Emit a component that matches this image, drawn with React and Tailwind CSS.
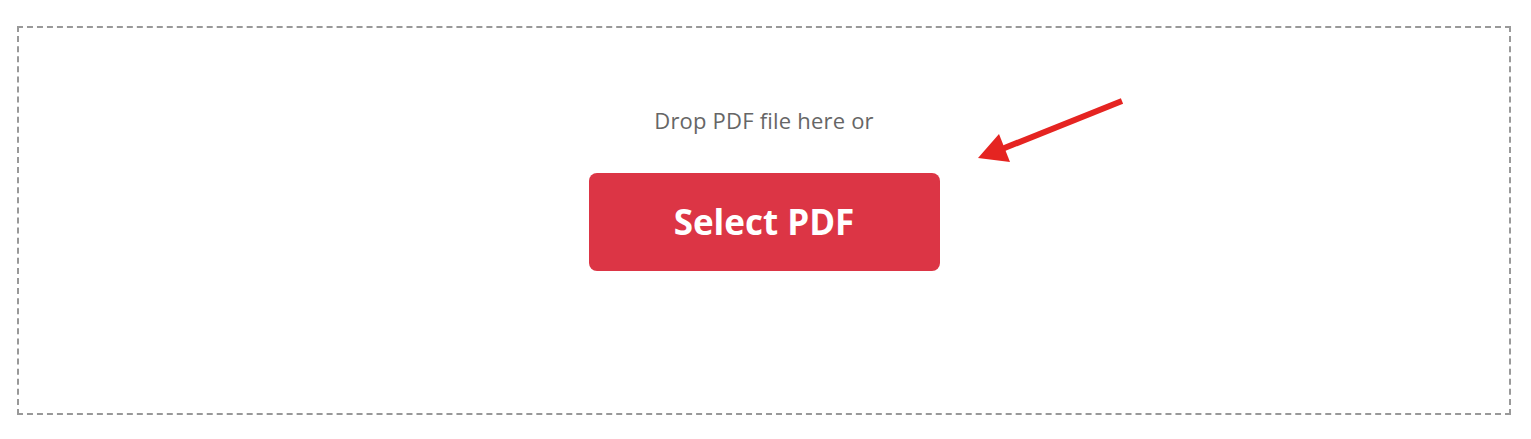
import React from 'react';

function Arrow() {
  return (
    <svg
      className="absolute left-0 top-0 pointer-events-none"
      width="1494"
      height="389"
      viewBox="0 0 1494 389"
    >
      {/* page coords shifted by box offset (17, 26) */}
      <line x1="1103" y1="73" x2="983" y2="121" stroke="#e52421" strokeWidth="6" />
      <polygon points="959,130 980,106 991,134" fill="#e52421" />
    </svg>
  );
}

export default function App() {
  return (
    <div className="pt-[26px] pl-[17px] pr-[20px] bg-white" style={{ fontFamily: '"Open Sans", "Noto Sans", sans-serif' }}>
      <div className="relative h-[389px] border-2 border-dashed border-[#999999] flex flex-col items-center">
        <p className="mt-[78px] text-[22px] leading-[28px] tracking-[0.2px] text-[#666666]">Drop PDF file here or</p>
        <button
          type="button"
          className="mt-[39px] w-[351px] h-[98px] rounded-lg bg-[#dc3545] text-white text-[35px] font-bold"
        >
          Select PDF
        </button>
        <Arrow />
      </div>
    </div>
  );
}
